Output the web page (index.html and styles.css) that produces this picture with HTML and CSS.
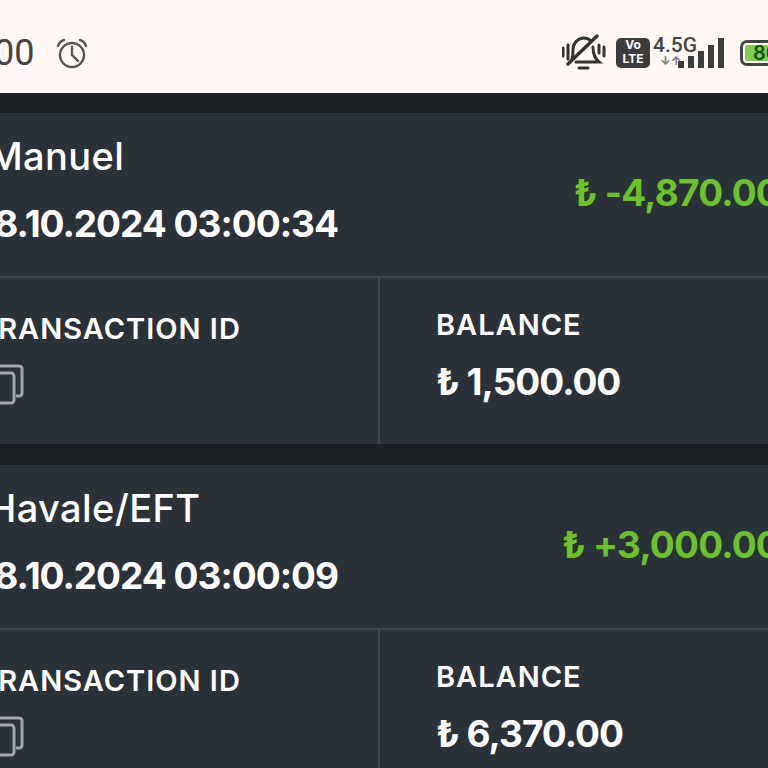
FILE: index.html
```html
<!DOCTYPE html>
<html lang="en">

<head>
    <meta charset="UTF-8">
    <meta name="viewport" content="width=device-width, initial-scale=1.0">
    <title>Transactions</title>
    <link rel="stylesheet" href="styles.css">
</head>

<body>
    <div class="screen">
        <header class="status-bar">
            <div class="status-left">
                <span class="clock">3:00</span>
                <svg class="alarm" viewBox="0 0 32 32" fill="none" stroke="#555" stroke-width="2.4" stroke-linecap="round">
                    <circle cx="16" cy="18" r="12" />
                    <path d="M16 10v8l6 6" />
                    <path d="M2 9c1-3 3-5 6-6" />
                    <path d="M30 9c-1-3-3-5-6-6" />
                </svg>
            </div>
            <div class="status-right">
                <svg class="bell-off" viewBox="0 0 44 38" fill="none" stroke="#333" stroke-width="3" stroke-linecap="round">
                    <path d="M10 25c1-3 1-6 1-9 0-7 5-12 11-12 3 0 5 1 7 3" />
                    <path d="M31 13c0 6 1 11 6 15H14" />
                    <path d="M6 30 35 2" stroke-width="3.4" />
                    <path d="M17 34h9" />
                    <path d="M1 14v8M6 11v14M37 11v8M42 13v9" />
                </svg>
                <div class="volte">Vo<br>LTE</div>
                <div class="network">
                    <span class="net-type">4.5G</span>
                    <span class="net-arrows">↓↑</span>
                </div>
                <div class="signal">
                    <i style="height:7px"></i>
                    <i style="height:12px"></i>
                    <i style="height:17px"></i>
                    <i style="height:23px"></i>
                    <i style="height:30px"></i>
                </div>
                <div class="battery"><span class="battery-fill">80</span></div>
            </div>
        </header>

        <main class="list">
            <section class="card">
                <div class="card-top">
                    <div>
                        <div class="name">Manuel</div>
                        <div class="date">28.10.2024 03:00:34</div>
                    </div>
                    <div class="amount">₺ -4,870.00</div>
                </div>
                <div class="card-bottom">
                    <div class="cell cell-id">
                        <div class="label">TRANSACTION ID</div>
                        <svg class="copy" viewBox="0 0 34 44" fill="none" stroke="#a3a7ab" stroke-width="3">
                            <path d="M8 4h21q3 0 3 3v24q0 3-3 3h-3" />
                            <rect x="2" y="11" width="22" height="30" rx="3" />
                        </svg>
                    </div>
                    <div class="cell">
                        <div class="label">BALANCE</div>
                        <div class="value">₺ 1,500.00</div>
                    </div>
                </div>
            </section>

            <section class="card">
                <div class="card-top">
                    <div>
                        <div class="name">Havale/EFT</div>
                        <div class="date">28.10.2024 03:00:09</div>
                    </div>
                    <div class="amount">₺ +3,000.00</div>
                </div>
                <div class="card-bottom">
                    <div class="cell cell-id">
                        <div class="label">TRANSACTION ID</div>
                        <svg class="copy" viewBox="0 0 34 44" fill="none" stroke="#a3a7ab" stroke-width="3">
                            <path d="M8 4h21q3 0 3 3v24q0 3-3 3h-3" />
                            <rect x="2" y="11" width="22" height="30" rx="3" />
                        </svg>
                    </div>
                    <div class="cell">
                        <div class="label">BALANCE</div>
                        <div class="value">₺ 6,370.00</div>
                    </div>
                </div>
            </section>
        </main>
    </div>
</body>

</html>
```

FILE: styles.css
```css
html,
body {
    margin: 0;
    height: 768px;
    overflow: hidden;
    background-color: #1c1f24;
}

.screen {
    width: 840px;
    margin-left: -24px;
    font-family: Inter, "Liberation Sans", sans-serif;
}

.status-bar {
    display: flex;
    justify-content: space-between;
    align-items: center;
    height: 93px;
    box-sizing: border-box;
    padding-top: 13px;
    background-color: #fff8f5;
    color: #444;
}

.status-left {
    display: flex;
    align-items: center;
    gap: 22px;
}

.clock {
    margin-left: -11px;
    font-family: Roboto, sans-serif;
    font-size: 36px;
}

.alarm {
    width: 32px;
    height: 32px;
}

.status-right {
    display: flex;
    align-items: center;
    width: 254px;
}

.bell-off {
    width: 44px;
    height: 38px;
    margin-right: 10px;
}

.volte {
    width: 34px;
    height: 30px;
    border-radius: 5px;
    background-color: #3c3c3c;
    color: #fff;
    font-size: 12px;
    font-weight: 700;
    line-height: 14px;
    text-align: center;
}

.network {
    display: flex;
    flex-direction: column;
    width: 25px;
    margin: -4px 0 0 3px;
    color: #444;
    white-space: nowrap;
}

.net-type {
    font-family: Roboto, sans-serif;
    font-size: 21px;
    font-weight: 500;
    line-height: 20px;
}

.net-arrows {
    margin-left: 7px;
    font-size: 12px;
    font-weight: 700;
    line-height: 12px;
    color: #777;
}

.signal {
    display: flex;
    align-items: flex-end;
    gap: 4px;
    height: 30px;
    margin: 0 16px 0 0;
}

.signal i {
    width: 6px;
    background-color: #3c3c3c;
}

.battery {
    width: 60px;
    height: 26px;
    box-sizing: border-box;
    padding: 2px;
    border: 3px solid #444;
    border-radius: 7px;
}

.battery-fill {
    display: block;
    width: 80%;
    height: 100%;
    padding-left: 8px;
    box-sizing: border-box;
    border-radius: 2px;
    background-color: #7ed04b;
    color: #1f4a1a;
    font-size: 20px;
    font-weight: 600;
    line-height: 16px;
}

.list {
    display: flex;
    flex-direction: column;
    gap: 21px;
    padding-top: 20px;
}

.card {
    background-color: #2b3139;
    color: #fff;
}

.card-top {
    display: flex;
    justify-content: space-between;
    align-items: center;
    height: 165px;
    box-sizing: border-box;
    padding-right: 36px;
    padding-bottom: 4px;
    border-bottom: 2px solid #42474e;
}

.card-top > div:first-child {
    margin-top: -5px;
}

.name {
    margin-bottom: 26px;
    padding-left: 12px;
    font-size: 38px;
    font-weight: 500;
    letter-spacing: 0.4px;
    line-height: 42px;
}

.date {
    margin-left: -4px;
    font-size: 37px;
    font-weight: 700;
    letter-spacing: -1px;
    line-height: 42px;
}

.amount {
    color: #6cc22a;
    font-size: 37px;
    font-weight: 700;
    letter-spacing: -0.8px;
    white-space: nowrap;
}

.card-bottom {
    display: grid;
    grid-template-columns: 404px 1fr;
    height: 166px;
}

.cell {
    padding: 30px 0 0 56px;
}

.cell-id {
    padding: 34px 0 0 2px;
    border-right: 2px solid #42474e;
}

.label {
    font-size: 29px;
    font-weight: 600;
    letter-spacing: 1px;
    line-height: 34px;
}

.value {
    margin-top: 20px;
    font-size: 37px;
    font-weight: 700;
    letter-spacing: -1px;
    line-height: 40px;
}

.copy {
    display: block;
    width: 34px;
    height: 44px;
    margin: 16px 0 0 12px;
}
```
